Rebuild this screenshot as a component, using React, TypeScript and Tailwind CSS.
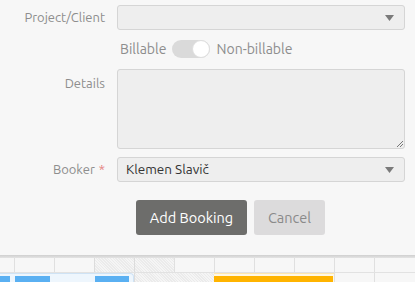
const Caret = () => (
  <svg width="9" height="6" viewBox="0 0 9 6" className="fill-[#7a7a7a]">
    <path d="M0 0h9L4.5 6z" />
  </svg>
)

const cols = [14, 54, 94, 134, 174, 214, 254, 294, 334, 374]

const hatch =
  'bg-[repeating-linear-gradient(45deg,#ebebeb_0,#ebebeb_1px,#f5f5f5_1px,#f5f5f5_2px)]'

const CalendarStrip = () => (
  <div className="relative h-[27px] w-full bg-[#f7f7f7]">
    <div className="h-[3px] w-full bg-gradient-to-b from-[#cfcfcf] to-[#e4e4e4]" />
    <div className="flex h-[15px] border-b border-[#e2e2e2]">
      {cols.map((x, i) => (
        <div
          key={x}
          className={
            i === 3 || i === 4
              ? `h-full w-10 shrink-0 border-l border-[#dcdcdc] ${hatch}`
              : i === 0
                ? 'h-full w-[14px] shrink-0'
                : 'h-full w-10 shrink-0 border-l border-[#e0e0e0]'
          }
        />
      ))}
      <div className="h-full flex-1 border-l border-[#e0e0e0]" />
    </div>
    <div className="flex h-[9px]">
      <div className="relative h-full w-[134px] shrink-0 rounded-tr-[4px] border-r border-t border-[#cfe3f5] bg-[#eef6fd]">
        <div className="absolute left-0 top-[2px] h-[6px] w-[10px] bg-[#5ab0f2]" />
        <div className="absolute left-[15px] top-[2px] h-[6px] w-[35px] bg-[#5ab0f2]" />
        <div className="absolute left-[95px] top-[2px] h-[6px] w-[34px] bg-[#5ab0f2]" />
      </div>
      <div className={`h-full w-20 shrink-0 border-l border-[#dcdcdc] ${hatch}`} />
      <div className="relative h-full w-[120px] shrink-0 border-t border-[#fde7b0] bg-[#fff8e6]">
        <div className="absolute bottom-0 left-0 h-[6px] w-[119px] bg-[#ffb400]" />
      </div>
      <div className="h-full w-10 shrink-0 border-l border-[#e0e0e0]" />
      <div className="h-full flex-1 border-l border-[#e0e0e0]" />
    </div>
  </div>
)

export default function App() {
  return (
    <div className="flex h-[282px] w-[415px] flex-col overflow-hidden bg-[#f7f7f7] font-['Ubuntu','Noto_Sans',sans-serif] text-[13px]">
      <div className="h-[255px] shrink-0 pl-3 pr-[10px] pt-[5px]">
        <div className="grid grid-cols-[93px_1fr] gap-x-3">
          <div className="flex h-[25px] items-center justify-end text-[#8d8d8d]">Project/Client</div>
          <div className="flex h-[25px] items-center justify-end rounded-[3px] border border-[#d5d5d5] bg-[#eeeeee] px-[10px]">
            <Caret />
          </div>

          <div />
          <div className="mt-[10px] flex h-[18px] items-center gap-[6px] pl-[3px] text-[14px] text-[#8d8d8d]">
            <span>Billable</span>
            <span className="relative inline-block h-[18px] w-[38px] rounded-full bg-[#dadada]">
              <span className="absolute right-0 top-0 h-[18px] w-[18px] rounded-full border border-[#dedede] bg-white" />
            </span>
            <span>Non-billable</span>
          </div>

          <div className="mt-[11px] flex items-start justify-end pt-[5px] text-[#8d8d8d]">Details</div>
          <div className="relative mt-[11px] h-[80px] rounded-[3px] border border-[#d5d5d5] bg-[#eeeeee]">
            <svg width="7" height="7" viewBox="0 0 7 7" className="absolute bottom-[1px] right-[1px] stroke-[#777]">
              <path d="M1 7L7 1M4 7L7 4" strokeWidth="1" />
            </svg>
          </div>

          <div className="mt-[8px] flex h-[25px] items-center justify-end text-[#8d8d8d]">
            Booker<span className="ml-1 text-[#e57c7c]">*</span>
          </div>
          <div className="mt-[8px] flex h-[25px] items-center justify-between rounded-[3px] border border-[#d5d5d5] bg-[#eeeeee] pl-2 pr-[10px] text-[13.5px] text-[#333]">
            <span>Klemen Slavič</span>
            <Caret />
          </div>
        </div>

        <div className="mt-[18px] flex gap-[7px] pl-[124px]">
          <button type="button" className="h-[35px] w-[111px] rounded-[3px] bg-[#6d6d6b] text-[14.5px] text-white">
            Add Booking
          </button>
          <button type="button" className="h-[35px] w-[71px] rounded-[3px] bg-[#dcdbdc] text-[14.5px] text-[#8a8a8a]">
            Cancel
          </button>
        </div>
      </div>
      <CalendarStrip />
    </div>
  )
}
